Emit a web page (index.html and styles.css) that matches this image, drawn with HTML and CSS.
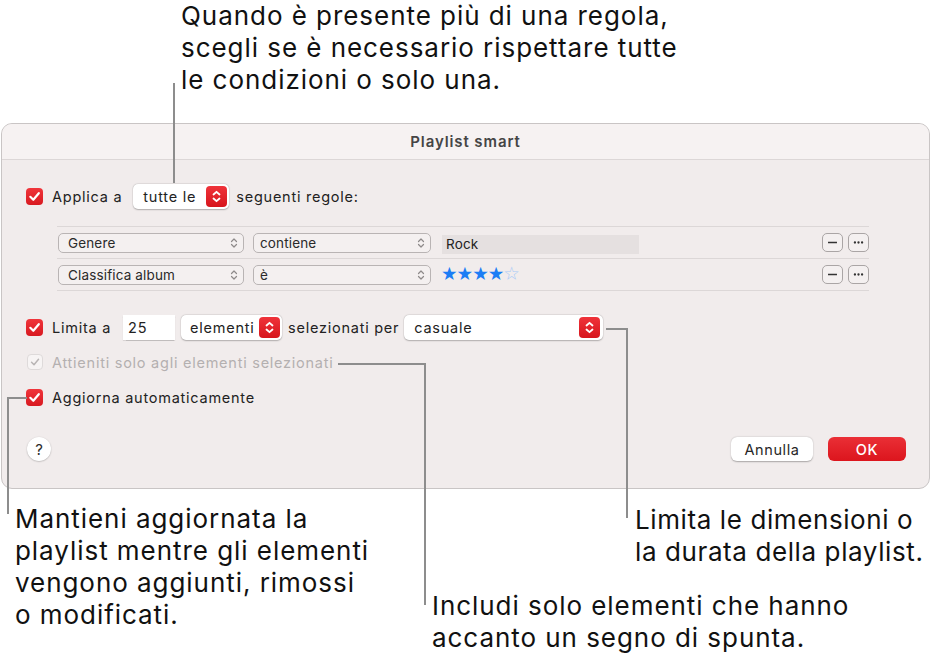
FILE: index.html
```html
<!DOCTYPE html>
<html lang="it">
<head>
<meta charset="utf-8">
<title>Playlist smart</title>
<link rel="stylesheet" href="styles.css">
</head>
<body>
<div class="page">
  <div class="dialog">
    <div class="titlebar">Playlist smart</div>
    <div class="content">
      <div class="row apply">
        <span class="check"><svg viewBox="0 0 17 17"><path d="M4.3 8.8 L7.3 11.8 L12.8 5.2" /></svg></span>
        <span class="label">Applica a</span>
        <span class="popup popup-all"><span class="ptext">tutte le</span><span class="stepper"><svg viewBox="0 0 21 21"><path d="M7.5 8.5 L10.5 5.8 L13.5 8.5 M7.5 12.5 L10.5 15.2 L13.5 12.5"/></svg></span></span>
        <span class="label">seguenti regole:</span>
      </div>

      <div class="rules">
        <div class="rule">
          <span class="rpop rpop-field">Genere<svg class="mini" viewBox="0 0 8 12"><path d="M1.5 4.5 L4 2 L6.5 4.5 M1.5 7.5 L4 10 L6.5 7.5"/></svg></span>
          <span class="rpop rpop-op">contiene<svg class="mini" viewBox="0 0 8 12"><path d="M1.5 4.5 L4 2 L6.5 4.5 M1.5 7.5 L4 10 L6.5 7.5"/></svg></span>
          <span class="valfield">Rock</span>
          <span class="spacer"></span>
          <span class="sqbtn"><svg viewBox="0 0 21 19"><path d="M5.5 9.5 H15.5"/></svg></span>
          <span class="sqbtn"><svg viewBox="0 0 21 19"><circle cx="6.5" cy="9.5" r="1.3"/><circle cx="10.5" cy="9.5" r="1.3"/><circle cx="14.5" cy="9.5" r="1.3"/></svg></span>
        </div>
        <div class="rule">
          <span class="rpop rpop-field">Classifica album<svg class="mini" viewBox="0 0 8 12"><path d="M1.5 4.5 L4 2 L6.5 4.5 M1.5 7.5 L4 10 L6.5 7.5"/></svg></span>
          <span class="rpop rpop-op">è<svg class="mini" viewBox="0 0 8 12"><path d="M1.5 4.5 L4 2 L6.5 4.5 M1.5 7.5 L4 10 L6.5 7.5"/></svg></span>
          <span class="stars"><span class="on">★★★★</span><span class="off">☆</span></span>
          <span class="spacer"></span>
          <span class="sqbtn"><svg viewBox="0 0 21 19"><path d="M5.5 9.5 H15.5"/></svg></span>
          <span class="sqbtn"><svg viewBox="0 0 21 19"><circle cx="6.5" cy="9.5" r="1.3"/><circle cx="10.5" cy="9.5" r="1.3"/><circle cx="14.5" cy="9.5" r="1.3"/></svg></span>
        </div>
      </div>

      <div class="row limit">
        <span class="check"><svg viewBox="0 0 17 17"><path d="M4.3 8.8 L7.3 11.8 L12.8 5.2" /></svg></span>
        <span class="label">Limita a</span>
        <span class="numfield">25</span>
        <span class="popup popup-items"><span class="ptext">elementi</span><span class="stepper"><svg viewBox="0 0 21 21"><path d="M7.5 8.5 L10.5 5.8 L13.5 8.5 M7.5 12.5 L10.5 15.2 L13.5 12.5"/></svg></span></span>
        <span class="label">selezionati per</span>
        <span class="popup popup-order"><span class="ptext">casuale</span><span class="stepper"><svg viewBox="0 0 21 21"><path d="M7.5 8.5 L10.5 5.8 L13.5 8.5 M7.5 12.5 L10.5 15.2 L13.5 12.5"/></svg></span></span>
      </div>

      <div class="row small disabled">
        <span class="check check-off"><svg viewBox="0 0 17 17"><path d="M4.3 8.8 L7.3 11.8 L12.8 5.2" /></svg></span>
        <span class="label">Attieniti solo agli elementi selezionati</span>
      </div>

      <div class="row small auto">
        <span class="check"><svg viewBox="0 0 17 17"><path d="M4.3 8.8 L7.3 11.8 L12.8 5.2" /></svg></span>
        <span class="label">Aggiorna automaticamente</span>
      </div>

      <div class="footer">
        <span class="help">?</span>
        <span class="spacer"></span>
        <span class="btn btn-cancel">Annulla</span>
        <span class="btn btn-ok">OK</span>
      </div>
    </div>
  </div>

  <div class="callout c-top">Quando è presente più di una regola,<br>scegli se è necessario rispettare tutte<br>le condizioni o solo una.</div>
  <div class="callout c-keep">Mantieni aggiornata la<br>playlist mentre gli elementi<br>vengono aggiunti, rimossi<br>o modificati.</div>
  <div class="callout c-limit">Limita le dimensioni o<br>la durata della playlist.</div>
  <div class="callout c-incl">Includi solo elementi che hanno<br>accanto un segno di spunta.</div>

  <span class="ln ln-top"></span>
  <span class="ln ln-limit-h"></span>
  <span class="ln ln-limit-v"></span>
  <span class="ln ln-incl-h"></span>
  <span class="ln ln-incl-v"></span>
  <span class="ln ln-keep-h"></span>
  <span class="ln ln-keep-v"></span>
</div>
</body>
</html>
```

FILE: styles.css
```css
* { box-sizing: border-box; }
html, body { margin: 0; padding: 0; background: #ffffff; }
body {
  font-family: Inter, "Noto Sans", "Liberation Sans", sans-serif;
  color: #1d1d1d;
}
.page {
  position: relative;
  width: 931px;
  height: 662px;
  overflow: hidden;
  padding-top: 123px;
  padding-left: 1px;
}

/* ---------- dialog ---------- */
.dialog {
  width: 929px;
  height: 366px;
  border: 1px solid #c9c5c5;
  border-radius: 11px;
  background: #f1ecec;
  overflow: hidden;
}
.titlebar {
  height: 36px;
  background: #f6f2f2;
  border-bottom: 1px solid #dcd7d7;
  display: flex;
  align-items: center;
  justify-content: center;
  font-size: 15px;
  font-weight: 600;
  letter-spacing: 0.9px;
  color: #454545;
}
.content {
  padding: 0 23px 0 24px;
  display: flex;
  flex-direction: column;
}
.row {
  display: flex;
  align-items: center;
  height: 26px;
  font-size: 14.5px;
  letter-spacing: 0.75px;
  color: #222;
}
.apply { margin-top: 23px; }
.label { white-space: nowrap; }
.check {
  width: 17px;
  height: 17px;
  border-radius: 4px;
  background: linear-gradient(#f0353b, #d81920);
  display: inline-flex;
  flex: none;
  margin-right: 9px;
}
.check svg { width: 17px; height: 17px; }
.check path { fill: none; stroke: #fff; stroke-width: 2.2; stroke-linecap: round; stroke-linejoin: round; }
.check-off {
  background: #f7f4f4;
  border: 1px solid #dedada;
  width: 16px; height: 16px;
  margin-left: 1px;
}
.check-off svg { width: 14px; height: 14px; }
.check-off path { stroke: #b9b5b5; stroke-width: 1.8; }

.popup {
  display: inline-flex;
  align-items: center;
  height: 25px;
  background: #fff;
  border-radius: 5px;
  box-shadow: 0 0.5px 1.5px rgba(0,0,0,0.25), 0 0 0 0.5px rgba(0,0,0,0.06);
  padding-left: 10px;
  padding-right: 2px;
  flex: none;
}
.popup .ptext { flex: 1; white-space: nowrap; }
.stepper {
  width: 21px;
  height: 21px;
  border-radius: 4px;
  background: linear-gradient(#ef333a, #d7151c);
  display: inline-flex;
}
.stepper svg { width: 21px; height: 21px; }
.stepper path { fill: none; stroke: #fff; stroke-width: 1.8; stroke-linecap: round; stroke-linejoin: round; }
.popup-all { width: 96px; margin: 0 7px 0 11px; }
.popup-items { width: 101px; margin: 0 6px 0 6px; padding-left: 9px; }
.popup-order { width: 199px; margin-left: 5px; padding-left: 10px; padding-right: 3px; }

/* ---------- rules ---------- */
.rules {
  margin-top: 17px;
  margin-left: 31px;
  width: 812px;
  border-top: 1px solid #dcd7d7;
}
.rule {
  display: flex;
  align-items: center;
  height: 32px;
  border-bottom: 1px solid #dcd7d7;
  padding-left: 1px;
  font-size: 13.5px;
  letter-spacing: 0.15px;
  color: #2a2a2a;
}
.rpop {
  display: inline-flex;
  align-items: center;
  justify-content: space-between;
  height: 20px;
  border: 1px solid #b9b4b4;
  border-radius: 5px;
  padding: 0 5px 0 9px;
  background: #f4f0f0;
  flex: none;
}
.rpop-field { width: 186px; }
.rpop-op { width: 178px; margin-left: 9px; padding-left: 6px; }
.mini { width: 8px; height: 12px; }
.mini path { fill: none; stroke: #8e8a8a; stroke-width: 1.2; stroke-linecap: round; stroke-linejoin: round; }
.valfield {
  margin-left: 11px;
  width: 197px;
  height: 19px;
  background: #e5e0e0;
  padding-left: 4px;
  display: inline-flex;
  align-items: center;
  margin-top: 3px;
  color: #222;
}
.stars {
  margin-left: 10px;
  font-size: 18.5px;
  letter-spacing: -1px;
  line-height: 1;
  font-family: "DejaVu Sans", sans-serif;
}
.stars .on { color: #1c7df5; }
.stars .off { color: #a9cbf7; }
.spacer { flex: 1; }
.sqbtn {
  width: 21px;
  height: 19px;
  border: 1px solid #aaa5a5;
  border-radius: 5px;
  display: inline-flex;
  margin-left: 5px;
  background: #f4f0f0;
}
.sqbtn:first-of-type { margin-left: 0; }
.sqbtn svg { width: 19px; height: 17px; }
.sqbtn path { stroke: #333; stroke-width: 1.4; }
.sqbtn circle { fill: #333; }

/* ---------- lower rows ---------- */
.limit { margin-top: 23px; }
.numfield {
  width: 52px;
  height: 25px;
  background: #fff;
  margin-left: 12px;
  padding-left: 5px;
  display: inline-flex;
  align-items: center;
  box-shadow: 0 0.5px 1px rgba(0,0,0,0.2);
}
.small { height: 18px; }
.disabled { margin-top: 13px; color: #b4b0b0; }
.auto { margin-top: 17px; }

.footer {
  margin-top: 31px;
  display: flex;
  align-items: center;
  height: 24px;
}
.help {
  width: 24px;
  height: 24px;
  border-radius: 50%;
  background: #fff;
  box-shadow: 0 0.5px 1.5px rgba(0,0,0,0.3);
  display: inline-flex;
  align-items: center;
  justify-content: center;
  font-size: 15px;
  color: #2a2a2a;
  margin-left: 1px;
}
.btn {
  height: 24px;
  border-radius: 6px;
  display: inline-flex;
  align-items: center;
  justify-content: center;
  font-size: 14.5px;
  letter-spacing: 0.6px;
}
.btn-cancel {
  width: 82px;
  background: #fff;
  color: #262626;
  box-shadow: 0 0.5px 1.5px rgba(0,0,0,0.3);
}
.btn-ok {
  width: 78px;
  margin-left: 15px;
  background: linear-gradient(#ea2f36, #dc151d);
  color: #fff;
  font-weight: 500;
}

/* ---------- callouts ---------- */
.callout {
  position: absolute;
  font-size: 26px;
  letter-spacing: 0.95px;
  line-height: 32px;
  color: #111;
  white-space: nowrap;
}
.c-top { left: 181px; top: 0px; }
.c-keep { left: 15px; top: 503px; }
.c-limit { left: 635px; top: 504px; letter-spacing: 0.6px; }
.c-incl { left: 432px; top: 590px; }

.ln { position: absolute; background: #8d8d8d; display: block; }
.ln-top { left: 173px; top: 83px; width: 2px; height: 100px; }
.ln-limit-h { left: 606px; top: 328px; width: 22px; height: 2px; }
.ln-limit-v { left: 626px; top: 328px; width: 2px; height: 190px; }
.ln-incl-h { left: 338px; top: 363px; width: 88px; height: 2px; }
.ln-incl-v { left: 424px; top: 363px; width: 2px; height: 242px; }
.ln-keep-h { left: 7px; top: 397px; width: 20px; height: 2px; }
.ln-keep-v { left: 7px; top: 397px; width: 2px; height: 117px; }
```
